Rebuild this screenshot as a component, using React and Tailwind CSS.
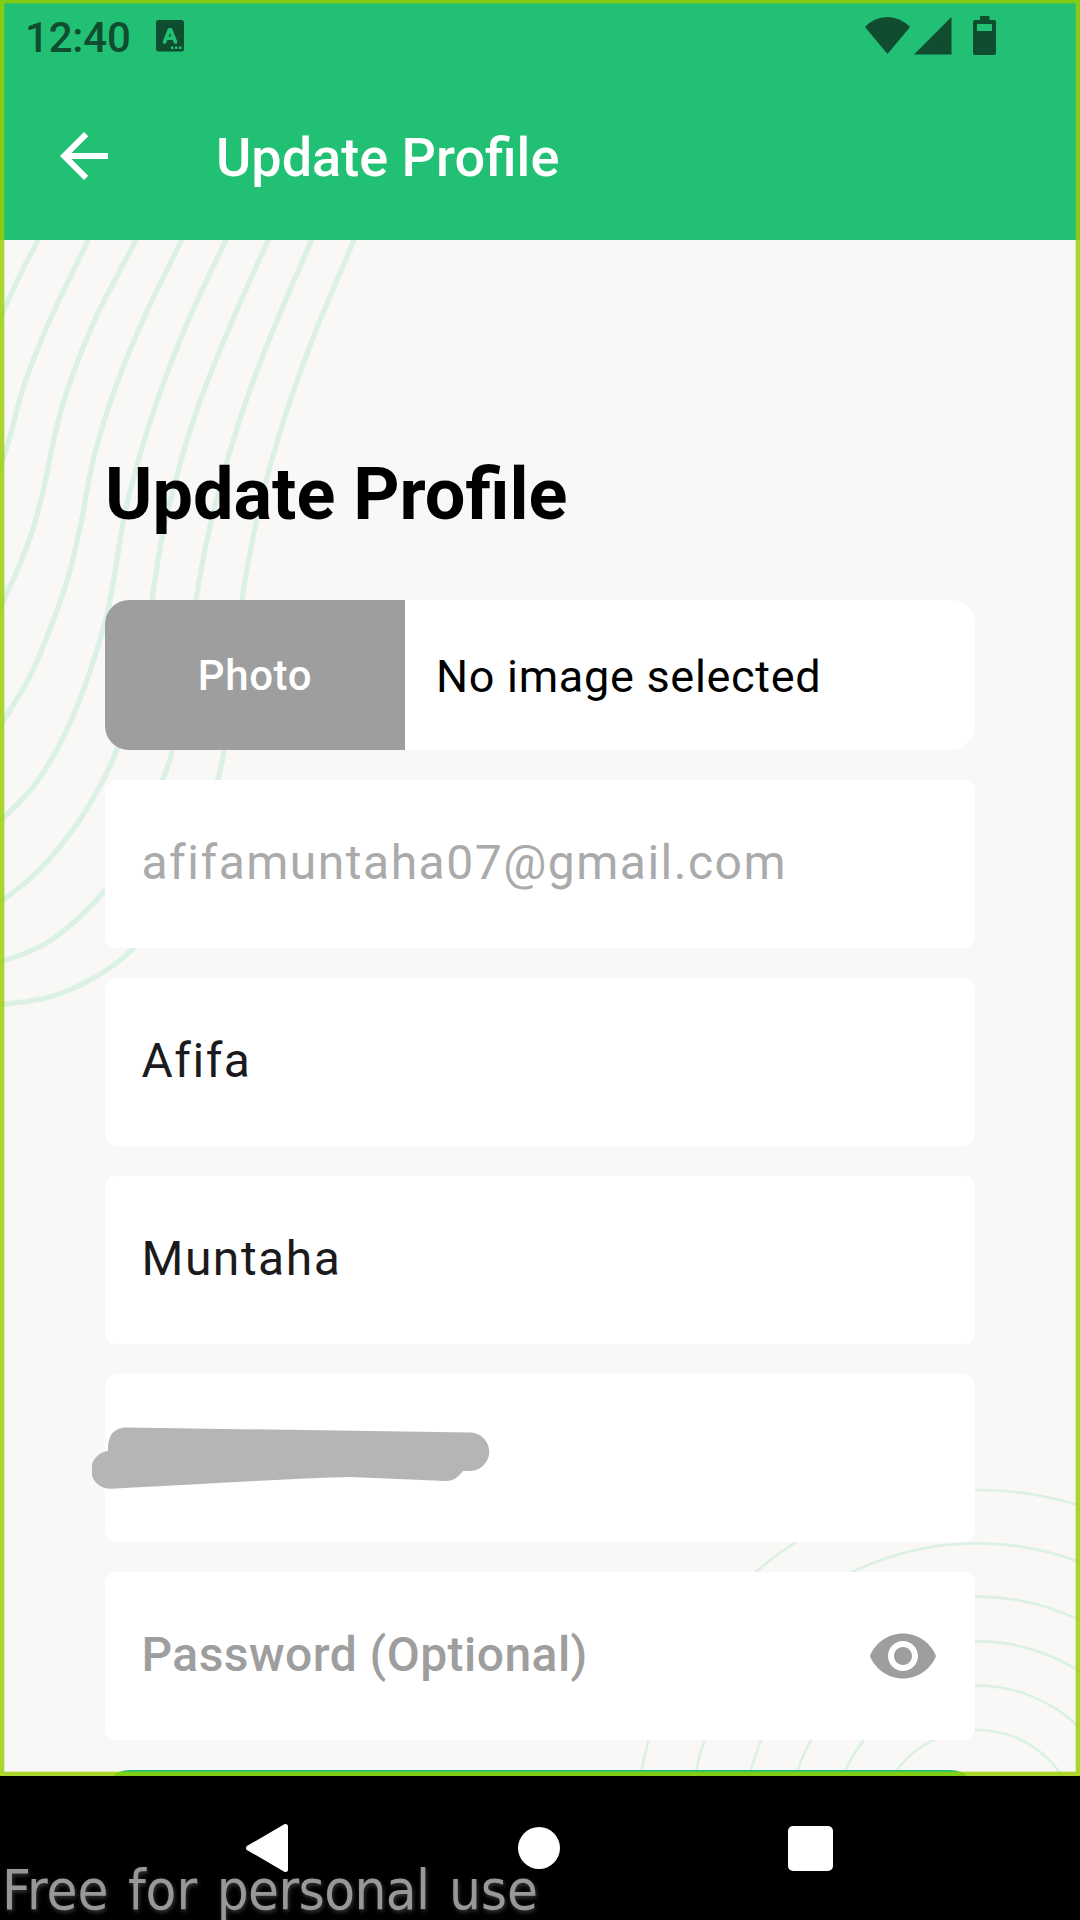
import React from "react";

// Contour lines of the upper left corner, as points on a grid of a third of a pixel.
const CONTOURS = [
  [[168, -88], [115, 12], [62, 112], [12, 222], [-20, 310]],
  [[315, -88], [265, 12], [155, 240], [95, 385], [62, 480], [36, 580], [12, 660], [-15, 730]],
  [[460, -88], [408, 12], [290, 240], [228, 390], [184, 520], [155, 640], [134, 745], [100, 875], [60, 983], [10, 1095], [-20, 1160]],
  [[597, -88], [545, 12], [430, 250], [348, 450], [285, 650], [245, 850], [216, 980], [182, 1092], [100, 1300], [12, 1452], [-20, 1500]],
  [[728, -88], [678, 12], [560, 265], [473, 490], [410, 690], [371, 850], [350, 980], [330, 1092], [300, 1212], [235, 1402], [175, 1532], [100, 1652], [12, 1744], [-20, 1775]],
  [[853, -88], [805, 12], [690, 270], [595, 510], [530, 720], [487, 900], [456, 1092], [418, 1340], [350, 1542], [300, 1650], [225, 1772], [120, 1900], [12, 1990], [-20, 2010]],
  [[980, -88], [935, 12], [820, 280], [740, 490], [680, 680], [630, 870], [588, 1092], [560, 1330], [517, 1542], [488, 1632], [415, 1820], [315, 1962], [240, 2042], [130, 2127], [12, 2174], [-20, 2182]],
  [[1105, -88], [1062, 12], [945, 290], [865, 510], [805, 710], [766, 870], [726, 1092], [700, 1330], [672, 1542], [653, 1632], [590, 1850], [510, 2010], [400, 2137], [300, 2215], [160, 2280], [12, 2305], [-20, 2306]],
];

const RINGS = [303, 436, 569, 703, 863, 1023];

// Catmull-Rom spline through the points, written as cubic Béziers.
function smooth(points) {
  let d = `M${points[0][0]} ${points[0][1]}`;
  for (let i = 0; i < points.length - 1; i++) {
    const p0 = points[i - 1] || points[i];
    const p1 = points[i];
    const p2 = points[i + 1];
    const p3 = points[i + 2] || p2;
    d += `C${p1[0] + (p2[0] - p0[0]) / 6} ${p1[1] + (p2[1] - p0[1]) / 6} ${p2[0] - (p3[0] - p1[0]) / 6} ${p2[1] - (p3[1] - p1[1]) / 6} ${p2[0]} ${p2[1]}`;
  }
  return d;
}

function Backdrop() {
  return (
    <svg className="absolute inset-0" width="1080" height="1536" viewBox="0 240 1080 1536" fill="none" stroke="#dcf1e5">
      <g transform="translate(0 236) scale(0.33333)" strokeWidth="16">
        {CONTOURS.map((points, i) => (
          <path key={i} d={smooth(points)} />
        ))}
      </g>
      <g transform="translate(640 1480) scale(0.33333)" strokeWidth="8">
        {RINGS.map((r) => (
          <circle key={r} cx="1012" cy="1053" r={r} />
        ))}
      </g>
    </svg>
  );
}

function StatusBar() {
  return (
    <div className="flex h-[72px] items-start justify-between pr-[84px] pl-[25px] text-[#0f4c30]">
      <div className="flex items-start">
        <span className="w-[131px] pt-[13px] text-[42px] leading-[50px] font-medium tracking-[-0.2px] whitespace-nowrap">12:40</span>
        <svg className="mt-[20px]" width="28" height="32" viewBox="0 0 28 32">
          <rect width="28" height="31.5" rx="2.5" fill="currentColor" />
          <path d="M8.500 22 13.300 9.800h1.400L19.500 22M10.600 18.300h6.800" fill="none" stroke="#22c074" strokeWidth="3.600" strokeLinecap="round" strokeLinejoin="round" />
          <g fill="#22c074">
            <rect x="15" y="26.5" width="2.5" height="2.5" />
            <rect x="19" y="26.5" width="2.5" height="2.5" />
            <rect x="23" y="26.5" width="2.5" height="2.5" />
          </g>
        </svg>
      </div>
      <div className="flex items-start pt-[16px]">
        <svg width="45" height="39" viewBox="0 0 45 39" fill="currentColor">
          <path d="M0 11Q9.500 1 22.300 1T45 11L22.500 38Z" />
        </svg>
        <svg className="ml-[4px]" width="38" height="39" viewBox="0 0 38 39" fill="currentColor">
          <path d="M0 38.500 37.500 1V38.500Z" />
        </svg>
        <svg className="ml-[21px]" width="23" height="39" viewBox="0 0 23 39" fill="currentColor">
          <path fillRule="evenodd" d="M7 0h9.500v4H21q2 0 2 2v31q0 2-2 2H2q-2 0-2-2V6q0-2 2-2h5zM4 8v7h15V8z" />
        </svg>
      </div>
    </div>
  );
}

function AppBar() {
  return (
    <div className="flex h-[168px] items-start pt-[48px] pl-[48px] text-white">
      <svg width="72" height="72" viewBox="0 0 24 24" fill="currentColor">
        <path d="M20 11H7.830l5.590-5.590L12 4l-8 8 8 8 1.410-1.410L7.830 13H20v-2z" />
      </svg>
      <h2 className="ml-[96px] pt-[6px] text-[54px] leading-[64px] font-medium whitespace-nowrap">Update Profile</h2>
    </div>
  );
}

function Field({ children }) {
  return <div className="relative flex h-[168px] items-center justify-between rounded-[12px] bg-white pr-[36px] pl-[36.500px]">{children}</div>;
}

function Scribble() {
  return (
    <svg className="absolute top-[48px] left-[-13px]" width="400" height="76" viewBox="92 1422 400 76" fill="#b5b5b5">
      <path d="M127 1427.500 470 1432.500A19.200 19.200 0 0 1 470 1471H463Q456 1481 446 1481L350 1477Q300 1478 112 1488.700A18.500 18.500 0 0 1 108 1451Q107 1427.500 127 1427.500Z" />
    </svg>
  );
}

function NavBar() {
  return (
    <div className="relative flex h-[144px] items-center justify-between bg-black pr-[247px] pl-[246px]">
      <svg width="43" height="50" viewBox="1 0 43 50" fill="#fff" stroke="#fff" strokeWidth="5" strokeLinejoin="round">
        <path d="M3.500 25 40.500 3.500V46.500Z" />
      </svg>
      <div className="h-[42px] w-[42px] rounded-full bg-white" />
      <div className="h-[45px] w-[45px] rounded-[5px] bg-white" />
      <div className="absolute bottom-0 left-[2px] font-['DejaVu_Sans_Condensed','DejaVu_Sans',sans-serif] text-[56px] leading-[60px] [word-spacing:3.5px] whitespace-nowrap text-[#989898] [text-shadow:1px_2px_4px_#3a3a3a]">
        Free for <span className="tracking-[-0.600px]">personal</span> use
      </div>
    </div>
  );
}

export default function App() {
  return (
    <div className="h-[1920px] w-[1080px] overflow-hidden bg-black font-['Roboto',sans-serif]">
      <div className="relative flex h-[1776px] flex-col overflow-hidden bg-[#f9f8f6]">
        <header className="bg-[#22c074]">
          <StatusBar />
          <AppBar />
        </header>
        <main className="relative h-[1536px] overflow-hidden">
          <Backdrop />
          <div className="relative px-[105px] pt-[213px]">
            <h1 className="text-[72px] leading-[84px] font-bold whitespace-nowrap text-black">Update Profile</h1>
            <div className="mt-[63px] flex flex-col gap-[30px]">
              <div className="flex h-[150px] overflow-hidden rounded-[24px] bg-white">
                <div className="flex w-[300px] items-center justify-center bg-[#9e9e9e] text-[42px] font-medium tracking-[0.6px] text-white">Photo</div>
                <div className="flex items-center pt-[3px] pl-[31px] text-[45px] tracking-[0.7px] whitespace-nowrap text-black">No image selected</div>
              </div>
              <Field>
                <span className="pb-[2px] text-[48px] tracking-[1.5px] text-[#aaaaab]">afifamuntaha07@gmail.com</span>
              </Field>
              <Field>
                <span className="pb-[2px] text-[48px] tracking-[1.5px] text-[#1b1b1d]">Afifa</span>
              </Field>
              <Field>
                <span className="pb-[2px] text-[48px] tracking-[1.5px] text-[#1b1b1d]">Muntaha</span>
              </Field>
              <Field>
                <Scribble />
              </Field>
              <Field>
                <span className="pb-[2px] text-[48px] font-medium tracking-[0.45px] text-[#9e9e9e]">Password (Optional)</span>
                <svg width="72" height="72" viewBox="0 0 24 24" fill="#9e9e9e">
                  <path d="M12 4.500C7 4.500 2.730 7.610 1 12c1.730 4.390 6 7.500 11 7.500s9.270-3.110 11-7.500c-1.730-4.390-6-7.500-11-7.500zM12 17c-2.760 0-5-2.240-5-5s2.240-5 5-5 5 2.240 5 5-2.240 5-5 5zm0-8c-1.660 0-3 1.340-3 3s1.340 3 3 3 3-1.340 3-3-1.340-3-3-3z" />
                </svg>
              </Field>
              <button className="h-[150px] rounded-[24px] bg-[#22c074]" aria-label="Update" />
            </div>
          </div>
        </main>
        <div className="pointer-events-none absolute inset-0 border-[4px] border-t-[3px] border-[#99ce01]/82" />
        <div className="pointer-events-none absolute inset-x-[4px] top-[3px] bottom-[4px] border border-[#99ce01]/30" />
      </div>
      <NavBar />
    </div>
  );
}
